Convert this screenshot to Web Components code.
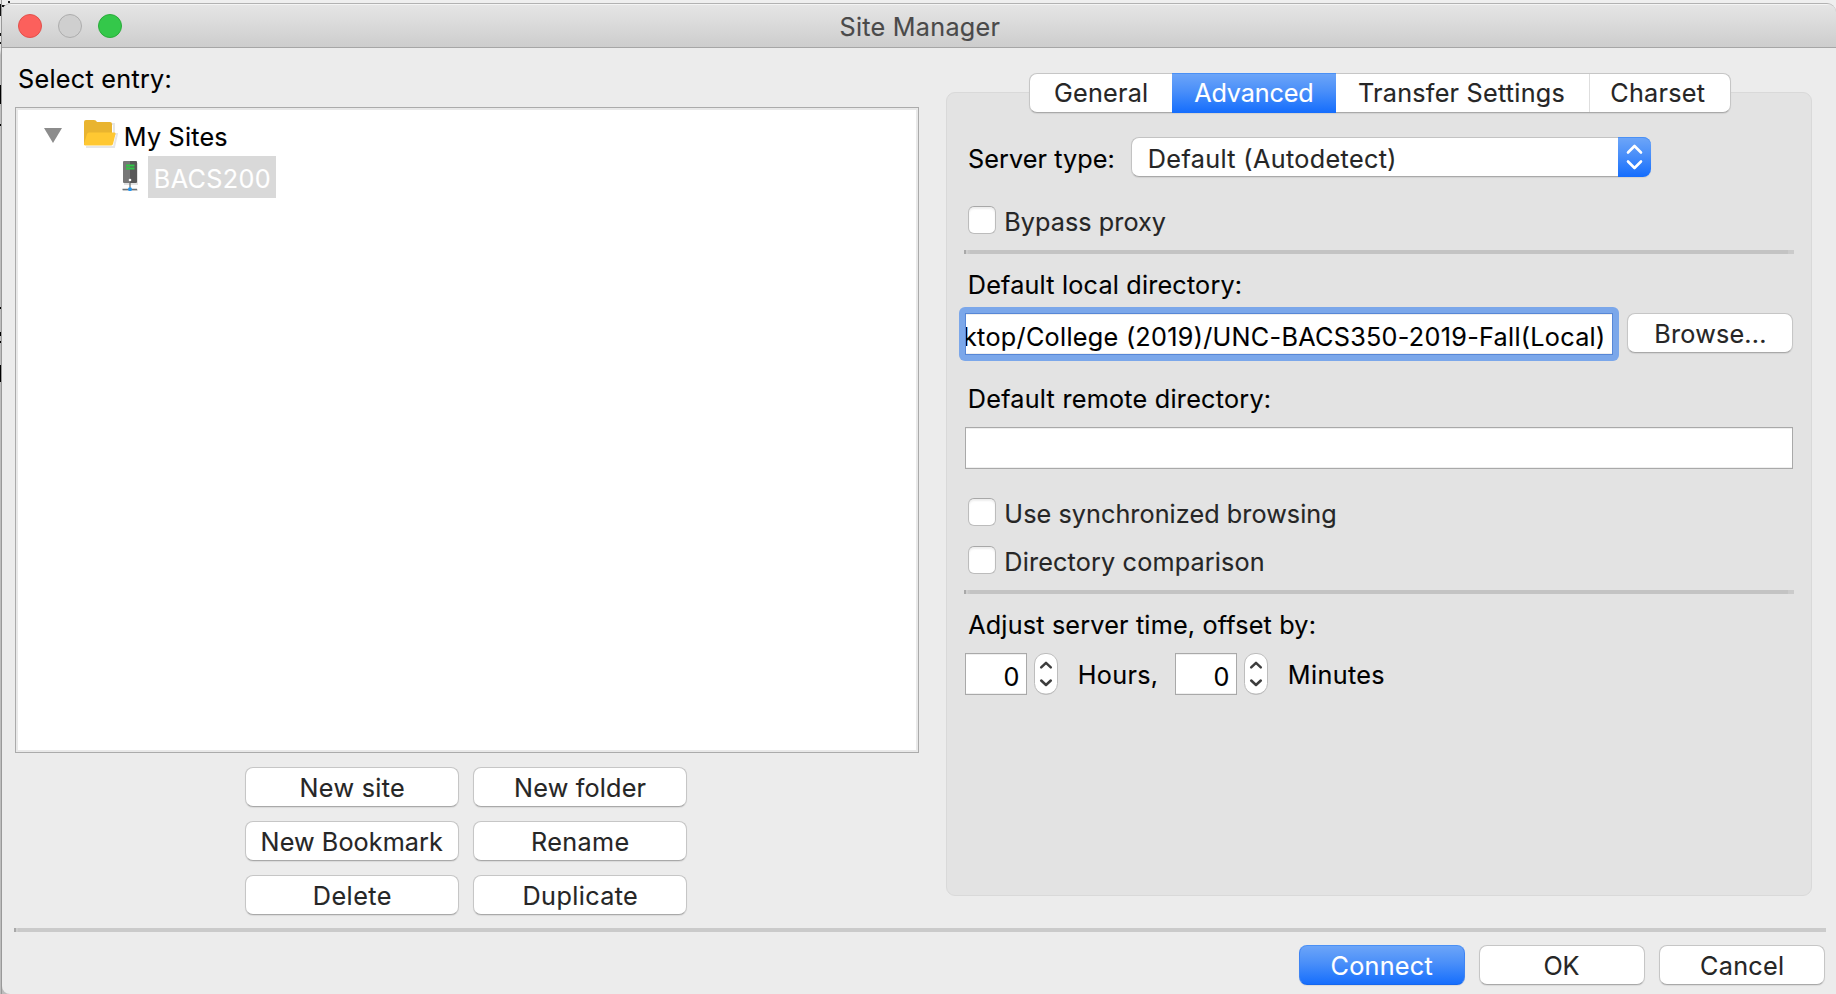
<!DOCTYPE html>
<html lang="en">
<head>
<meta charset="utf-8">
<title>Site Manager</title>
<style>
html,body{margin:0;height:100%;overflow:hidden;background:#ececec}
body{font-family:Inter,"Liberation Sans",sans-serif;font-size:25.2px;line-height:30px;color:#000}
</style>
</head>
<body>
<site-manager></site-manager>
<script>
const define=(name,html,setup)=>{
  const t=document.createElement('template');t.innerHTML=html;
  customElements.define(name,class extends HTMLElement{
    constructor(){super();this.attachShadow({mode:'open'}).append(t.content.cloneNode(true));}
    connectedCallback(){if(setup)setup(this,this.shadowRoot);}
  });
};
const ctx=document.createElement('canvas').getContext('2d');

/* A single line of text whose ink spans exactly `w` pixels. */
define('ui-text',`<style>:host{display:block;white-space:pre;height:30px;line-height:30px;flex:none;-webkit-text-stroke:.12px currentColor}</style><slot></slot>`,el=>{
  const s=getComputedStyle(el),str=el.textContent,w=+el.getAttribute('w');
  ctx.font=`${s.fontWeight} ${s.fontSize} Inter, "Liberation Sans", sans-serif`;
  const m=ctx.measureText(str),ink=m.actualBoundingBoxRight+m.actualBoundingBoxLeft;
  const nudge=/^[BDHMNRU]/.test(str)?.8:/^[AT]/.test(str)?-.8:0;
  el.style.width=w+'px';
  el.style.textIndent=m.actualBoundingBoxLeft+nudge+'px';
  if(str.length>1)el.style.letterSpacing=(w-ink)/(str.length-1)+'px';
});

define('ui-button',`<style>
:host{display:flex;justify-content:center;box-sizing:border-box;height:40px;padding-top:5px;border:1px solid #c6c6c6;border-bottom-color:#a9a9a9;border-radius:8px;background:#fff;color:#262626;box-shadow:0 1px 1px rgba(0,0,0,.08);flex:none}
:host([primary]){color:#fff;border-color:#4a90f5 #3f84f3 #1567ee;background:linear-gradient(#6ea6f8,#4a8ff9 45%,#146dfd);background-origin:border-box}
</style><slot></slot>`);

define('ui-checkbox',`<style>
:host{display:flex;height:28px;margin-left:3px;gap:9.5px;color:#262626}
i{box-sizing:border-box;width:28px;height:28px;border:1px solid #bcbcbc;border-top-color:#a8a8a8;border-radius:6px;background:#fff;box-shadow:inset 0 2px 2px #eee}
::slotted(*){margin-top:1px}
</style><i></i><slot></slot>`);

define('ui-line',`<style>
:host{display:block;height:4px;flex:none;background:linear-gradient(90deg,#a9a9a9 0 2px,#cfcfcf 2px 4px,#c8c8c8 4px 6px,transparent 6px),linear-gradient(270deg,#cbcbcb 6px,transparent 6px),var(--line,#c3c3c3)}
</style>`);

define('ui-input',`<style>
:host{display:block}
.ring{border-radius:6px}
.box{box-sizing:border-box;height:42px;border:1px solid #a9a9a9;background:#fff;box-shadow:inset 0 1px #efefef,inset 0 -1px #efefef;padding:8px var(--end,9px) 0 1px;display:flex;justify-content:flex-end;overflow:hidden}
:host([focused]) .ring{background:#7ba7ea;padding:6px;margin:-6px}
:host([focused]) .box{border-color:#5787d6}
</style><div class="ring"><div class="box"><slot></slot></div></div>`);

define('ui-select',`<style>
:host{display:flex;box-sizing:border-box;width:520px;height:40px;border-radius:8px;box-shadow:0 1px 1px rgba(0,0,0,.08)}
.v{flex:1;box-sizing:border-box;border:1px solid #c3c3c3;border-bottom-color:#a9a9a9;border-right:0;border-radius:8px 0 0 8px;background:#fff;padding:6px 0 0 17.500px;color:#262626}
svg{width:33px;height:40px;border-radius:0 8px 8px 0;background:linear-gradient(#6ea6f8,#4a8ff9 45%,#146dfd);box-shadow:inset 0 1px #4a90f5}
</style><div class="v"><slot></slot></div>
<svg viewBox="0 0 33 40" fill="none" stroke="#fff" stroke-width="2.6" stroke-linecap="round" stroke-linejoin="round"><path d="M10 15.500 16.500 9 23 15.500M10 24.500 16.500 31 23 24.500"/></svg>`);

define('ui-stepper',`<style>
:host{display:flex;gap:7px}
.n{width:62px;--end:7.5px}
svg{width:24px;height:42px;overflow:visible}
</style><ui-input class="n"><slot></slot></ui-input>
<svg viewBox="0 0 24 42"><rect x="1" y="1.500" width="22" height="40.500" rx="10.500" fill="#999" opacity=".45"/><rect x=".5" y=".5" width="23" height="40.500" rx="10.500" fill="#fff" stroke="#bdbdbd"/><path d="M7.200 14.300 12 9.800 16.800 14.300M7.200 27.500 12 32 16.800 27.500" fill="none" stroke="#3d3d3d" stroke-width="2.500" stroke-linecap="round" stroke-linejoin="round"/></svg>`);

define('ui-tabs',`<style>
:host{display:flex;box-sizing:border-box;width:702px;height:40px;border:1px solid #c6c6c6;border-bottom-color:#a9a9a9;border-radius:8px;background:#fff;color:#262626;box-shadow:0 1px 1px rgba(0,0,0,.08);position:relative;z-index:1}
::slotted(*){box-sizing:border-box;padding-top:4px;display:flex;justify-content:center}
::slotted([on]){color:#fff;margin:-1px 0;padding-top:5px!important;background:linear-gradient(#6ea6f8,#4a8ff9 45%,#146dfd);box-shadow:inset 0 1px #4a90f5}
</style><slot></slot>`);

define('title-bar',`<style>
:host{display:grid;grid-template-columns:1fr auto 1fr;box-sizing:border-box;height:45px;border-top:1px solid #b2b2b2;border-bottom:1px solid #a6a6a6;background:linear-gradient(#f4f4f4 0 1px,#e5e5e5 1px,#cdcdcd);border-radius:9px 9px 0 0;color:#4a4a4a}
svg{width:120px;height:43px}
::slotted(*){margin:8px 0 0 2px}
</style>
<svg viewBox="2 4 120 43"><circle cx="30" cy="26" r="11.500" fill="#fc605c" stroke="#e2504b"/><circle cx="70" cy="26" r="11.500" fill="#cfcfcf" stroke="#adadad"/><circle cx="110" cy="26" r="11.500" fill="#34c84a" stroke="#2aab3a"/></svg>
<slot></slot>`);

define('site-tree',`<style>
:host{display:block;box-sizing:border-box;width:904px;height:646px;border:1px solid #ababab;background:#fff;box-shadow:inset 0 0 0 2px #e9e9e9;padding-top:6px}
.row{display:flex;height:42px}
.arrow{width:18px;height:15px;margin:14px 22px 0 28px}
.folder{width:34px;height:30px;margin:5px 7px 0 0}
.server{width:18px;height:34px;margin:3px 9px 0 105px}
ui-text{margin-top:8px}
.sel{background:#d9d9d9;color:#fff;width:128px;display:flex;padding-left:7px;box-sizing:border-box}
</style>
<div class="row">
<svg class="arrow" viewBox="0 0 18 15"><path d="M0 0H18L9 15Z" fill="#8c8c8c"/></svg>
<svg class="folder" viewBox="0 0 34 30"><path d="M2 28H30L33 15H30V5H15" fill="none" stroke="#e6e6e6" stroke-width="2"/><path d="M0 3Q0 1 2 1H10Q12 1 13 3H26Q28 3 28 5V16H0Z" fill="#e9b42f"/><path d="M0 26V14H28V26Z" fill="#e9b42f"/><path d="M5 13.500H30.500Q32 13.500 31.500 15L29 25Q28.500 26.500 27 26.500H1.500Q0 26.500 0 25L3 15Q3.500 13.500 5 13.500Z" fill="#ffc832"/></svg>
<ui-text w="101.5">My Sites</ui-text></div>
<div class="row">
<svg class="server" viewBox="0 0 18 34"><path d="M3 4H17V26H3Z" fill="#e2e2e2"/><path d="M2 31H17" stroke="#e4e4e4" stroke-width="2"/><path d="M2 3Q2 2 3 2H9V24H3Q2 24 2 23Z" fill="#777"/><path d="M9 2H15Q16 2 16 3V23Q16 24 15 24H9Z" fill="#585858"/><path d="M5 6.500H13.500M5 9.500H13.500" stroke="#2fc845" stroke-width="1.900"/><circle cx="9" cy="21" r="1.300" fill="#fff"/><path d="M9 24V29M1.500 30.500H16" stroke="#6b7276" stroke-width="1.300"/><rect x="7.300" y="28.500" width="3.400" height="3.500" rx=".8" fill="#2196f3"/></svg>
<div class="sel"><ui-text w="114">BACS200</ui-text></div></div>`);

define('entry-pane',`<style>
:host{display:block;width:904px;padding:16px 0 0 13px}
.lbl{margin:0 0 13px 4px}
.btns{display:grid;grid-template-columns:214px 214px;gap:14px;margin:14px 0 0 230px}
</style>
<ui-text class="lbl" w="151.5">Select entry:</ui-text>
<site-tree></site-tree>
<div class="btns">
<ui-button><ui-text w="102.5">New site</ui-text></ui-button><ui-button><ui-text w="129.5">New folder</ui-text></ui-button>
<ui-button><ui-text w="180.5">New Bookmark</ui-text></ui-button><ui-button><ui-text w="95.5">Rename</ui-text></ui-button>
<ui-button><ui-text w="76">Delete</ui-text></ui-button><ui-button><ui-text w="112.5">Duplicate</ui-text></ui-button>
</div>`);

define('settings-pane',`<style>
:host{display:block;width:866px;margin:25px 0 0 27px}
ui-tabs{margin:0 0 -21px 83px}
.panel{box-sizing:border-box;height:804px;border:1px solid #d9d9d9;border-radius:9px;background:#e3e3e3;padding:44px 18px 0 18px;display:flex;flex-direction:column}
.r{display:flex}
.lbl{margin:16px 0 13px 4px}
ui-line{margin:16px 0 0 -1px;width:830px}
.spin{display:flex}
.spin>ui-text{margin:7px 0 0 21px}
</style>
<ui-tabs>
<div style="width:142px"><ui-text w="92">General</ui-text></div>
<div on style="width:164px"><ui-text w="118">Advanced</ui-text></div>
<div style="width:254px;border-right:1px solid #dedede"><ui-text w="205.5">Transfer Settings</ui-text></div>
<div style="width:140px;padding-right:4px"><ui-text w="93.5">Charset</ui-text></div>
</ui-tabs>
<div class="panel">
<div class="r"><ui-text w="144.5" style="margin:7px 17px 0 4px">Server type:</ui-text><ui-select><ui-text w="244.5">Default (Autodetect)</ui-text></ui-select></div>
<ui-checkbox style="margin-top:29px"><ui-text w="159.5">Bypass proxy</ui-text></ui-checkbox>
<ui-line></ui-line>
<ui-text class="lbl" w="271">Default local directory:</ui-text>
<div class="r"><ui-input focused style="width:648px;margin-right:14px"><ui-text w="639">ktop/College (2019)/UNC-BACS350-2019-Fall(Local)</ui-text></ui-input><ui-button style="width:166px"><ui-text w="109">Browse...</ui-text></ui-button></div>
<ui-text class="lbl" style="margin-top:29px" w="300">Default remote directory:</ui-text>
<ui-input></ui-input>
<ui-checkbox style="margin-top:29px"><ui-text w="329">Use synchronized browsing</ui-text></ui-checkbox>
<ui-checkbox style="margin-top:20px"><ui-text w="256.5">Directory comparison</ui-text></ui-checkbox>
<ui-line></ui-line>
<ui-text class="lbl" w="346.5">Adjust server time, offset by:</ui-text>
<div class="spin"><ui-stepper><ui-text w="14">0</ui-text></ui-stepper><ui-text w="77" style="margin-right:19px">Hours,</ui-text><ui-stepper><ui-text w="14">0</ui-text></ui-stepper><ui-text w="94.5">Minutes</ui-text></div>
</div>`);

define('site-manager',`<style>
:host{display:flex;height:994px;background:linear-gradient(#111,#111) 0 5px/5px 2px no-repeat,linear-gradient(#222,#222) 8px 1px/2px 2px no-repeat,linear-gradient(#efefef 0 30px,#bdbdbd 60px)}
.edge{width:2px;flex:none;box-shadow:inset -1px 0 #999;background:linear-gradient(#0000 4px,#111 4px 16px,#0000 16px 33px,#111 33px 36px,#0000 36px 42px,#111 42px 44px,#0000 44px 85px,#000 85px 104px,#0000 104px 124px,#000 124px 126px,#0000 126px 307px,#000 307px 309px,#0000 309px 332px,#000 332px 336px,#0000 336px 341px,#000 341px 343px,#0000 343px 365px,#000 365px 382px,#0000 382px),linear-gradient(#e5e5e5 50px,#bdbdbd 55px)}
.win{flex:1;margin-top:3px;background:#ececec;border-radius:9px 9px 0 8px}
.main{display:flex;height:880px}
ui-line{--line:#cacaca;margin-left:12px;width:1812px}
.foot{display:flex;justify-content:flex-end;gap:14px;padding:13px 11px 0 0}
.foot ui-button{width:166px}
</style>
<div class="edge"></div>
<div class="win">
<title-bar><ui-text w="159">Site Manager</ui-text></title-bar>
<div class="main"><entry-pane></entry-pane><settings-pane></settings-pane></div>
<ui-line></ui-line>
<div class="foot"><ui-button primary><ui-text w="101">Connect</ui-text></ui-button><ui-button><ui-text w="35">OK</ui-text></ui-button><ui-button><ui-text w="82">Cancel</ui-text></ui-button></div>
</div>`);
</script>
</body>
</html>
